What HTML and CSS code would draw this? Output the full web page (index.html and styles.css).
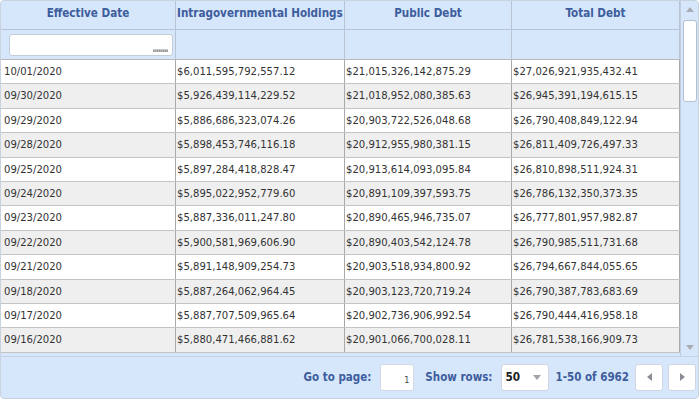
FILE: index.html
```html
<!DOCTYPE html>
<html>
<head>
<meta charset="utf-8">
<link rel="stylesheet" href="styles.css">
</head>
<body>
<div class="grid">
  <div class="viewport">
    <div class="table">
      <div class="hrow">
        <div class="hcell">Effective Date</div>
        <div class="hcell">Intragovernmental Holdings</div>
        <div class="hcell">Public Debt</div>
        <div class="hcell">Total Debt</div>
      </div>
      <div class="frow">
        <div class="fcell"><div class="finput"><span class="ficon"></span></div></div>
        <div class="fcell"></div>
        <div class="fcell"></div>
        <div class="fcell"></div>
      </div>
      <div class="rows">
        <div class="row"><div class="cell">10/01/2020</div><div class="cell">$6,011,595,792,557.12</div><div class="cell">$21,015,326,142,875.29</div><div class="cell">$27,026,921,935,432.41</div></div>
        <div class="row alt"><div class="cell">09/30/2020</div><div class="cell">$5,926,439,114,229.52</div><div class="cell">$21,018,952,080,385.63</div><div class="cell">$26,945,391,194,615.15</div></div>
        <div class="row"><div class="cell">09/29/2020</div><div class="cell">$5,886,686,323,074.26</div><div class="cell">$20,903,722,526,048.68</div><div class="cell">$26,790,408,849,122.94</div></div>
        <div class="row alt"><div class="cell">09/28/2020</div><div class="cell">$5,898,453,746,116.18</div><div class="cell">$20,912,955,980,381.15</div><div class="cell">$26,811,409,726,497.33</div></div>
        <div class="row"><div class="cell">09/25/2020</div><div class="cell">$5,897,284,418,828.47</div><div class="cell">$20,913,614,093,095.84</div><div class="cell">$26,810,898,511,924.31</div></div>
        <div class="row alt"><div class="cell">09/24/2020</div><div class="cell">$5,895,022,952,779.60</div><div class="cell">$20,891,109,397,593.75</div><div class="cell">$26,786,132,350,373.35</div></div>
        <div class="row"><div class="cell">09/23/2020</div><div class="cell">$5,887,336,011,247.80</div><div class="cell">$20,890,465,946,735.07</div><div class="cell">$26,777,801,957,982.87</div></div>
        <div class="row alt"><div class="cell">09/22/2020</div><div class="cell">$5,900,581,969,606.90</div><div class="cell">$20,890,403,542,124.78</div><div class="cell">$26,790,985,511,731.68</div></div>
        <div class="row"><div class="cell">09/21/2020</div><div class="cell">$5,891,148,909,254.73</div><div class="cell">$20,903,518,934,800.92</div><div class="cell">$26,794,667,844,055.65</div></div>
        <div class="row alt"><div class="cell">09/18/2020</div><div class="cell">$5,887,264,062,964.45</div><div class="cell">$20,903,123,720,719.24</div><div class="cell">$26,790,387,783,683.69</div></div>
        <div class="row"><div class="cell">09/17/2020</div><div class="cell">$5,887,707,509,965.64</div><div class="cell">$20,902,736,906,992.54</div><div class="cell">$26,790,444,416,958.18</div></div>
        <div class="row alt"><div class="cell">09/16/2020</div><div class="cell">$5,880,471,466,881.62</div><div class="cell">$20,901,066,700,028.11</div><div class="cell">$26,781,538,166,909.73</div></div>
      </div>
    </div>
    <div class="vscroll">
      <div class="sarrow"><svg width="8" height="5" viewBox="0 0 8 5"><path d="M0 5 L4 0 L8 5 Z" fill="#a8acb2"/></svg></div>
      <div class="strack"><div class="sthumb"></div></div>
      <div class="sarrow"><svg width="8" height="5" viewBox="0 0 8 5"><path d="M0 0 L8 0 L4 5 Z" fill="#a8acb2"/></svg></div>
    </div>
  </div>
  <div class="pager">
    <span class="plabel l-goto">Go to page:</span>
    <div class="pinput">1</div>
    <span class="plabel l-rows">Show rows:</span>
    <div class="pselect"><span class="pselval">50</span><svg width="8" height="5" viewBox="0 0 8 5"><path d="M0 0 L8 0 L4 5 Z" fill="#a0a4aa"/></svg></div>
    <span class="plabel l-count">1-50 of 6962</span>
    <div class="pbtn"><svg width="5" height="8" viewBox="0 0 5 8"><path d="M5 0 L5 8 L0 4 Z" fill="#8a8e94"/></svg></div>
    <div class="pbtn pbtn-next"><svg width="5" height="8" viewBox="0 0 5 8"><path d="M0 0 L5 4 L0 8 Z" fill="#8a8e94"/></svg></div>
  </div>
</div>
</body>
</html>
```

FILE: styles.css
```css
html, body {
  margin: 0;
  padding: 0;
  background: #ffffff;
}

body {
  font-family: "DejaVu Sans Condensed", "DejaVu Sans", sans-serif;
  font-size: 11px;
  color: #333333;
}

.grid {
  box-sizing: border-box;
  width: 699px;
  height: 399px;
  border: 1px solid #c9d3df;
  border-radius: 4px;
  overflow: hidden;
  background: #d6e6fb;
  display: flex;
  flex-direction: column;
}

.viewport {
  display: flex;
  height: 355px;
  flex: none;
  overflow: hidden;
  border-bottom: 1px solid #c6d2e2;
}

.table {
  width: 679px;
  flex: none;
  overflow: hidden;
}

.hrow, .frow, .row {
  display: grid;
  grid-template-columns: 175px 169px 167px 168px;
}

.hrow {
  height: 29px;
  box-sizing: border-box;
  border-bottom: 1px solid #b7c2d2;
}

.hcell {
  box-sizing: border-box;
  border-right: 1px solid #b9c3d1;
  font-weight: bold;
  font-size: 11.6px;
  color: #3d5d9c;
  text-align: center;
  line-height: 25px;
  white-space: nowrap;
  overflow: hidden;
}

.hcell:nth-child(2) {
  text-align: left;
  padding-left: 1px;
}

.frow {
  height: 30px;
  box-sizing: border-box;
  border-bottom: 1px solid #b4b8bf;
}

.fcell {
  box-sizing: border-box;
  border-right: 1px solid #b9c3d1;
  display: flex;
  align-items: center;
  padding-left: 8px;
}

.finput {
  position: relative;
  box-sizing: border-box;
  width: 164px;
  height: 22px;
  background: #ffffff;
  border: 1px solid #c5cdd8;
  border-radius: 3px;
  margin-top: 1px;
}

.ficon {
  position: absolute;
  right: 4px;
  bottom: 3px;
  width: 15px;
  height: 3px;
  background: repeating-linear-gradient(90deg, #9a9a9a 0 1px, #b8b8b8 1px 2px);
  border-top: 1px solid #c8c8c8;
  box-sizing: border-box;
}

.rows {
  background: #d6e6fb;
}

.row {
  height: 24.4px;
  box-sizing: border-box;
  border-bottom: 1px solid #c4c4c4;
  background: #ffffff;
}

.row.alt {
  background: #efefef;
}

.cell {
  box-sizing: border-box;
  border-right: 1px solid #a9a9a9;
  padding-left: 1px;
  line-height: 23px;
  white-space: nowrap;
  overflow: hidden;
  font-size: 11.2px;
}

.cell:first-child {
  padding-left: 3px;
}

.vscroll {
  box-sizing: border-box;
  width: 18px;
  flex: none;
  border-left: 1px solid #c2cedd;
  background: #d6e6fb;
  display: flex;
  flex-direction: column;
}

.sarrow {
  height: 17px;
  display: flex;
  align-items: center;
  justify-content: center;
  flex: none;
}

.strack {
  flex: 1;
  padding: 2px 1px 0 2px;
}

.sthumb {
  box-sizing: border-box;
  width: 14px;
  height: 82px;
  background: #ffffff;
  border: 1px solid #b3bfcd;
  border-radius: 3px;
}

.pager {
  flex: 1;
  display: flex;
  align-items: center;
  justify-content: flex-end;
  padding-right: 2px;
  padding-bottom: 1px;
}

.plabel {
  font-weight: bold;
  font-size: 11.5px;
  color: #3d5d9c;
  white-space: nowrap;
}

.pinput {
  box-sizing: border-box;
  width: 34px;
  height: 27px;
  margin-left: 9px;
  background: #ffffff;
  border: 1px solid #d2d9e2;
  border-radius: 3px;
  font-size: 9px;
  text-align: right;
  padding: 10px 4px 0 0;
  color: #444444;
}

.l-rows {
  margin-left: 11px;
}

.pselect {
  box-sizing: border-box;
  width: 48px;
  height: 27px;
  margin-left: 8px;
  background: #ffffff;
  border: 1px solid #cfd6df;
  border-radius: 3px;
  display: flex;
  align-items: center;
  justify-content: space-between;
  padding: 0 7px 0 4px;
}

.pselval {
  font-weight: bold;
  font-size: 11.7px;
  color: #222222;
}

.l-count {
  margin-left: 7px;
}

.pbtn {
  box-sizing: border-box;
  width: 28px;
  height: 27px;
  margin-left: 6px;
  background: #ffffff;
  border: 1px solid #cfd6df;
  border-radius: 3px;
  display: flex;
  align-items: center;
  justify-content: center;
}

.pbtn-next {
  margin-left: 5px;
}
```
